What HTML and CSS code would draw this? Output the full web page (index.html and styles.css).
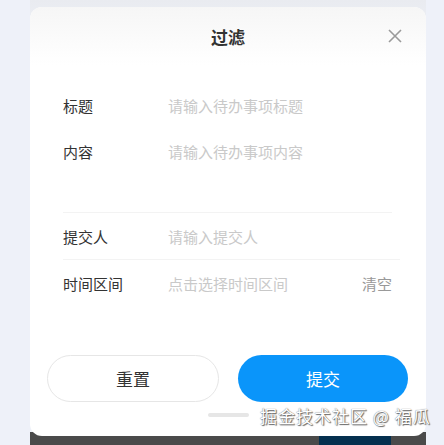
FILE: index.html
```html
<!DOCTYPE html>
<html lang="zh-CN">
<head>
    <meta charset="UTF-8">
    <meta name="viewport" content="width=device-width, initial-scale=1.0">
    <title>过滤</title>
    <link rel="stylesheet" href="styles.css">
</head>
<body>

<div class="page">
    <div class="filter-card">
        <div class="filter-header">
            <h1>过滤</h1>
            <span class="close-btn">
                <svg width="14" height="14" viewBox="0 0 14 14"><path d="M1 1 L13 13 M13 1 L1 13" stroke="#9a9a9a" stroke-width="1.6" fill="none"/></svg>
            </span>
        </div>

        <form class="filter-form">
            <div class="group group-top">
                <div class="field">
                    <label>标题</label>
                    <input type="text" placeholder="请输入待办事项标题">
                </div>
                <div class="field">
                    <label>内容</label>
                    <input type="text" placeholder="请输入待办事项内容">
                </div>
            </div>
            <div class="field field-line">
                <label>提交人</label>
                <input type="text" placeholder="请输入提交人">
            </div>
            <div class="field field-line wide">
                <label>时间区间</label>
                <input type="text" placeholder="点击选择时间区间">
                <span class="clear">清空</span>
            </div>
        </form>

        <div class="actions">
            <button type="button" class="btn btn-reset">重置</button>
            <button type="button" class="btn btn-submit">提交</button>
        </div>

        <div class="home-bar"></div>
    </div>
    <div class="tabbar">
        <span class="tab-active"></span>
    </div>
</div>

<div class="watermark">掘金技术社区 @ 福瓜</div>

</body>
</html>
```

FILE: styles.css
```css
body {
    margin: 0;
    font-family: "Noto Sans CJK SC", "Noto Sans", sans-serif;
    background: #eef1f9;
    height: 445px;
    overflow: hidden;
}
.page {
    margin: 0 18px 0 30px;
    padding-top: 7px;
    display: flex;
    flex-direction: column;
    background: linear-gradient(#e9ebf0, #eef1f8 40px);
}
.filter-card {
    position: relative;
    z-index: 1;
    height: 429px;
    background: #fff;
    border-radius: 12px;
    display: flex;
    flex-direction: column;
}
.filter-header {
    height: 58px;
    display: flex;
    align-items: center;
    justify-content: center;
    border-radius: 12px 12px 0 0;
    background: linear-gradient(#f6f6f6, #fff);
    position: relative;
}
.filter-header h1 {
    margin: 0;
    font-size: 17px;
    font-weight: bold;
    color: #333;
}
.close-btn {
    position: absolute;
    right: 24px;
    top: 22px;
    display: flex;
}
.filter-form {
    padding: 17px 34px 0 33px;
}
.group-top {
    height: 130px;
}
.field {
    height: 46px;
    display: flex;
    align-items: center;
    font-size: 15px;
}
.field-line {
    border-top: 1px solid #f3f3f3;
}
.field.wide {
    margin-right: -8px;
    padding-right: 8px;
}
.field label {
    width: 105px;
    flex-shrink: 0;
    color: #333;
}
.field input {
    flex: 1;
    min-width: 0;
    border: none;
    outline: none;
    padding: 0;
    font: inherit;
    color: #333;
    background: transparent;
}
.field input::placeholder {
    color: #c9c9c9;
}
.clear {
    color: #999;
}
.actions {
    margin-top: 49px;
    padding: 0 18px 0 17px;
    display: flex;
    gap: 19px;
}
.btn {
    flex: 1;
    height: 47px;
    border-radius: 24px;
    font-family: inherit;
    font-size: 17px;
    cursor: pointer;
}
.btn-reset {
    background: #fff;
    border: 1px solid #e6e6e6;
    color: #333;
}
.btn-submit {
    background: #0a95fa;
    border: none;
    color: #fff;
}
.home-bar {
    width: 41px;
    height: 4px;
    margin: 11px auto 0;
    border-radius: 2px;
    background: #e6e6e6;
}
.tabbar {
    height: 17px;
    margin-top: -4px;
    background: #4a4a4a;
    display: flex;
    justify-content: flex-end;
    padding-right: 35px;
}
.tab-active {
    width: 72px;
    background: #05304f;
}
.watermark {
    position: absolute;
    z-index: 2;
    left: 260px;
    top: 403px;
    font-size: 17px;
    color: #fff;
    text-shadow: 0 0 1px #555, 1px 1px 1px #666;
    letter-spacing: 1px;
}
```
